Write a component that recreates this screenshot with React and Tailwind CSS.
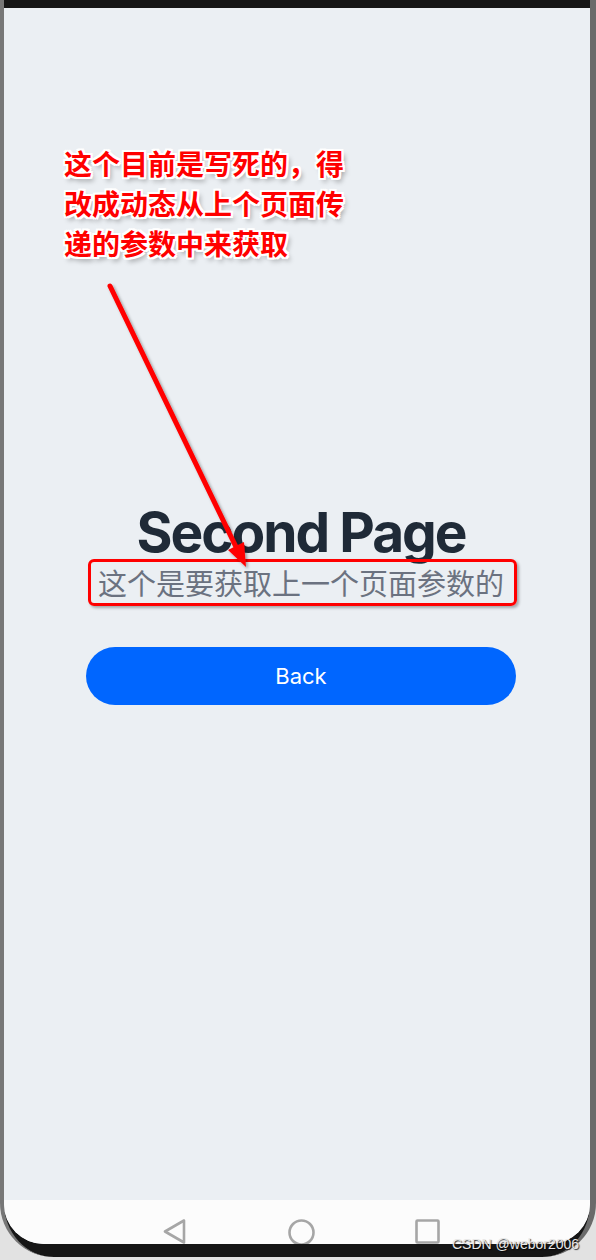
import React from 'react';

const outline =
  "[text-shadow:2px_0_0_#fff,-2px_0_0_#fff,0_2px_0_#fff,0_-2px_0_#fff,2px_2px_0_#fff,-2px_-2px_0_#fff,2px_-2px_0_#fff,-2px_2px_0_#fff,3px_4px_5px_rgba(0,0,0,0.35)]";

const NavBar = () => (
  <div className="flex h-[44px] shrink-0 items-start justify-center gap-[100px] bg-[#fcfcfc] pl-[7px] pt-[19px]">
    <svg width="26" height="26" viewBox="0 0 26 26" fill="none">
      <path d="M22 1.5 L3 12.5 L22 23.5 Z" stroke="#a6a6a6" strokeWidth="2.6" strokeLinejoin="round" />
    </svg>
    <svg width="27" height="27" viewBox="0 0 27 27" fill="none">
      <circle cx="13.5" cy="13.5" r="12" stroke="#a6a6a6" strokeWidth="2.6" />
    </svg>
    <svg width="25" height="25" viewBox="0 0 25 25" fill="none">
      <rect x="1.5" y="1.5" width="22" height="22" rx="1" stroke="#a6a6a6" strokeWidth="2.6" />
    </svg>
  </div>
);

const Arrow = () => (
  <svg className="pointer-events-none absolute inset-0" width="596" height="1260">
    <defs>
      <filter id="sh" x="-20%" y="-20%" width="140%" height="140%">
        <feDropShadow dx="2" dy="2" stdDeviation="1.5" floodColor="#000" floodOpacity="0.35" />
      </filter>
    </defs>
    <g filter="url(#sh)">
      <line x1="110" y1="286" x2="237" y2="549" stroke="#ff0000" strokeWidth="5" strokeLinecap="round" />
      <polygon points="246,567 228,550 244,542" fill="#ff0000" />
    </g>
  </svg>
);

export default function App() {
  return (
    <div className="relative h-[1260px] w-[596px] overflow-hidden bg-[#e2e2e2] font-['Noto_Sans_CJK_SC',sans-serif]">
      <div className="h-[1257px] rounded-b-[54px] border-l-4 border-r-[6px] border-l-[#777] border-r-[#6a6a6a] bg-[#161616] pb-[13px] pt-2">
        <div className="relative flex h-full flex-col overflow-hidden rounded-b-[40px] bg-[#ebeff3]">
          <div className="absolute left-[60px] top-[135px] text-[28px] font-bold leading-[40px] text-[#ff0000]">
            <p className={outline}>这个目前是写死的，得</p>
            <p className={outline}>改成动态从上个页面传</p>
            <p className={outline}>递的参数中来获取</p>
          </div>

          <main className="flex flex-1 flex-col items-center pl-2 pt-[497px]">
            <h1 className="font-['Inter',sans-serif] text-[55px] font-bold leading-none tracking-[-2px] text-[#1f2a37]">
              Second Page
            </h1>
            <div className="relative mt-[8px]">
              <p className="text-[29px] leading-none text-[#6b7280]">这个是要获取上一个页面参数的</p>
              <div className="absolute -bottom-[9px] -left-[10px] -right-[13px] -top-[9px] rounded-[6px] border-[3px] border-[#ff0000] shadow-[2px_2px_3px_rgba(0,0,0,0.3)]" />
            </div>
            <button className="mt-[50px] h-[58px] w-[430px] rounded-full bg-[#0066ff] font-['Inter',sans-serif] text-[22px] text-white">
              Back
            </button>
          </main>

          <NavBar />
        </div>
      </div>
      <Arrow />
      <span className="absolute left-[452px] top-[1234px] font-['Liberation_Sans',sans-serif] text-[14px] text-[#e8e8e8] [text-shadow:1px_1px_1px_rgba(0,0,0,0.8)]">
        CSDN @webor2006
      </span>
    </div>
  );
}
